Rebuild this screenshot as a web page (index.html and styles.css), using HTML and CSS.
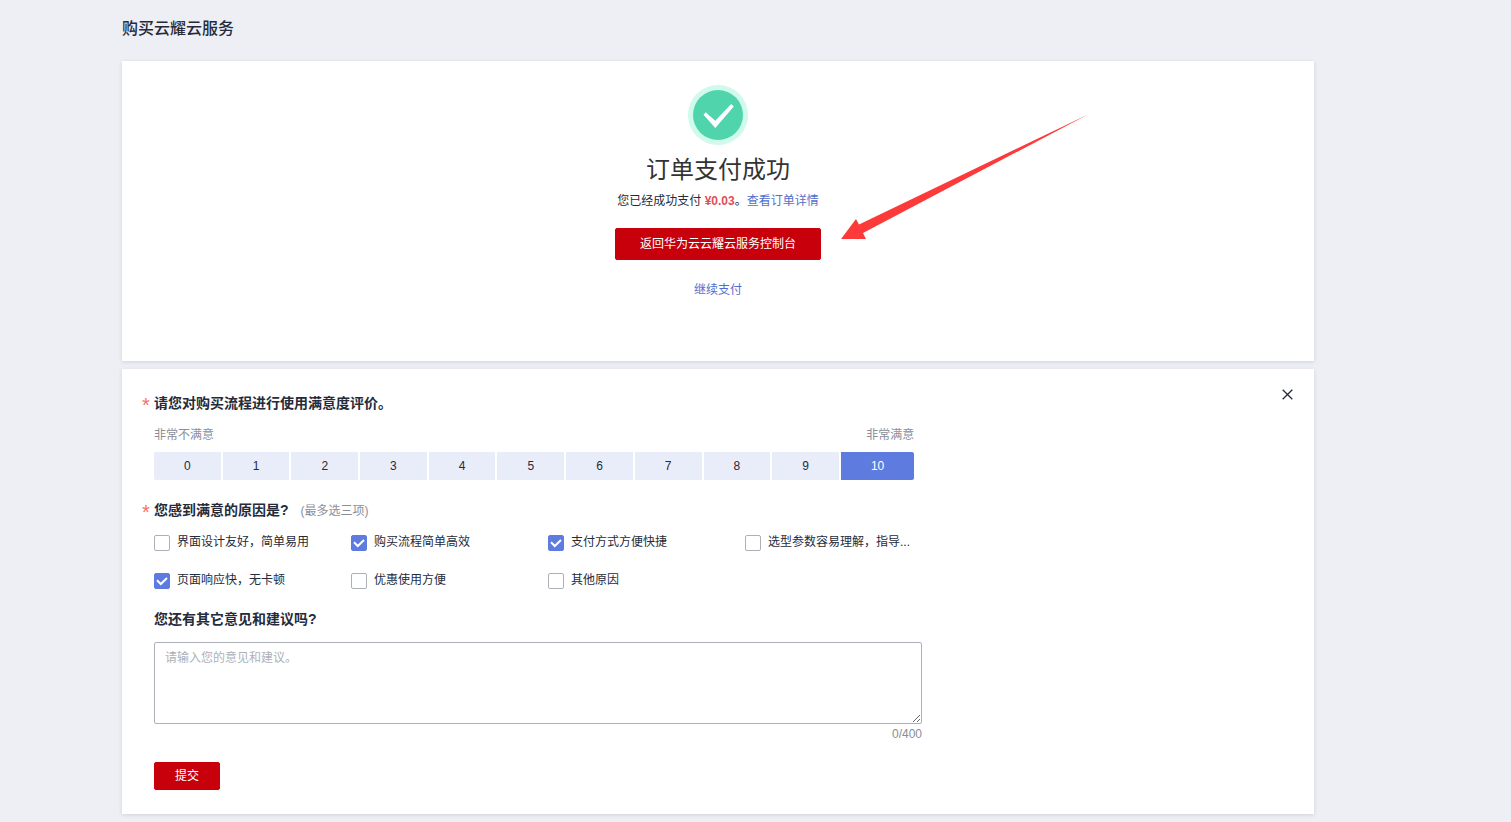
FILE: index.html
```html
<!DOCTYPE html>
<html lang="zh-CN">
<head>
<meta charset="utf-8">
<meta name="viewport" content="width=device-width, initial-scale=1">
<title>购买云耀云服务</title>
<link rel="stylesheet" href="styles.css">
</head>
<body>
<main class="page">
  <h1 class="page-title">购买云耀云服务</h1>

  <section class="card result">
    <svg class="result-icon" viewBox="0 0 60 60" aria-hidden="true">
      <circle cx="30" cy="30" r="30" fill="#cffaec"/>
      <circle cx="30" cy="30" r="25" fill="#50d4ab"/>
      <path d="M15.500 29.800 17.800 27.300 27.200 35.800 43.200 19 45.800 21.500 27.300 43Z" fill="#fff"/>
    </svg>
    <h2 class="result-title">订单支付成功</h2>
    <p class="result-text">您已经成功支付 <strong class="amount">¥0.03</strong>。<a class="link" href="#order">查看订单详情</a></p>
    <button class="btn btn-console" type="button">返回华为云云耀云服务控制台</button>
    <a class="link" href="#pay">继续支付</a>
    <svg class="arrow" viewBox="0 0 252 132" aria-hidden="true">
      <path d="M3 128 18 108 21 113.500 250 3.500 25 122 28 128Z" fill="#fc3a3a"/>
    </svg>
  </section>

  <form class="card survey">
    <div class="survey-head">
      <h3 class="question required" id="q-score"><span class="star">*</span>请您对购买流程进行使用满意度评价。</h3>
      <button class="close" type="button" aria-label="关闭">
        <svg viewBox="0 0 11 11" aria-hidden="true"><path d="M.7.7 10.300 10.300M10.300.7.7 10.300" fill="none" stroke="#252b3a" stroke-width="1.300"/></svg>
      </button>
    </div>
    <div class="scale-block">
      <div class="scale-ends"><span>非常不满意</span><span>非常满意</span></div>
      <div class="scale" role="radiogroup" aria-labelledby="q-score">
        <label class="score"><input type="radio" name="score" value="0"><span>0</span></label>
        <label class="score"><input type="radio" name="score" value="1"><span>1</span></label>
        <label class="score"><input type="radio" name="score" value="2"><span>2</span></label>
        <label class="score"><input type="radio" name="score" value="3"><span>3</span></label>
        <label class="score"><input type="radio" name="score" value="4"><span>4</span></label>
        <label class="score"><input type="radio" name="score" value="5"><span>5</span></label>
        <label class="score"><input type="radio" name="score" value="6"><span>6</span></label>
        <label class="score"><input type="radio" name="score" value="7"><span>7</span></label>
        <label class="score"><input type="radio" name="score" value="8"><span>8</span></label>
        <label class="score"><input type="radio" name="score" value="9"><span>9</span></label>
        <label class="score"><input type="radio" name="score" value="10" checked><span>10</span></label>
      </div>
    </div>

    <h3 class="question required"><span class="star">*</span>您感到满意的原因是?<small class="hint">(最多选三项)</small></h3>
    <div class="reasons">
      <label class="reason"><input class="check" type="checkbox">界面设计友好，简单易用</label>
      <label class="reason"><input class="check" type="checkbox" checked>购买流程简单高效</label>
      <label class="reason"><input class="check" type="checkbox" checked>支付方式方便快捷</label>
      <label class="reason"><input class="check" type="checkbox">选型参数容易理解，指导...</label>
      <label class="reason"><input class="check" type="checkbox" checked>页面响应快，无卡顿</label>
      <label class="reason"><input class="check" type="checkbox">优惠使用方便</label>
      <label class="reason"><input class="check" type="checkbox">其他原因</label>
    </div>

    <label class="question" for="comment">您还有其它意见和建议吗?</label>
    <div class="comment-block">
      <textarea class="comment" id="comment" maxlength="400" placeholder="请输入您的意见和建议。"></textarea>
      <span class="count">0/400</span>
    </div>
    <button class="btn btn-submit" type="submit">提交</button>
  </form>
</main>
</body>
</html>
```
FILE: styles.css
```css
* {
  box-sizing: border-box;
}

body {
  margin: 0;
  background: #eeeff5;
  color: #252b3a;
  font: 12px/18px "Liberation Sans", "Noto Sans CJK SC", sans-serif;
}

button,
textarea {
  font: inherit;
}

h1,
h2,
h3,
p {
  margin: 0;
}

.page {
  display: flex;
  flex-direction: column;
  gap: 8px;
  padding: 17px 197px 8px 122px;
}

.page-title {
  margin-bottom: 12px;
  font-size: 16px;
  line-height: 24px;
  font-weight: 500;
}

.card {
  background: #fff;
  box-shadow: 0 1px 4px rgba(37, 43, 58, 0.14);
}

.link {
  color: #526ecc;
  text-decoration: none;
}

.btn {
  border: 1px solid #c7000b;
  border-radius: 2px;
  background: #c7000b;
  color: #fff;
  cursor: pointer;
}

/* payment result */
.result {
  position: relative;
  display: flex;
  flex-direction: column;
  align-items: center;
  padding: 24px 24px 62px;
}

.result-icon {
  width: 60px;
  height: 60px;
}

.result-title {
  margin-top: 7px;
  color: #333;
  font-size: 24px;
  line-height: 36px;
  font-weight: 400;
}

.result-text {
  margin-top: 4px;
}

.amount {
  color: #e34d59;
}

.btn-console {
  height: 32px;
  margin: 18px 0 21px;
  padding: 0 24px;
}

.arrow {
  position: absolute;
  top: 50px;
  left: calc(50% + 120px);
  width: 252px;
  height: 132px;
}

/* survey */
.survey {
  display: flex;
  flex-direction: column;
  align-items: flex-start;
  padding: 20px 21px 24px 32px;
}

.survey-head {
  display: flex;
  align-self: stretch;
  justify-content: space-between;
}

.question {
  margin-top: 4px;
  font-size: 14px;
  line-height: 20px;
  font-weight: 700;
}

.required {
  margin-left: -12px;
}

.star {
  display: inline-block;
  width: 12px;
  color: #f66f6a;
  font-size: 20px;
  line-height: 0;
  vertical-align: -4px;
  font-weight: 400;
}

.hint {
  margin-left: 12px;
  color: #8a8e99;
  font-size: 12px;
  font-weight: 400;
}

.close {
  display: flex;
  width: 11px;
  height: 11px;
  padding: 0;
  border: 0;
  background: none;
  cursor: pointer;
}

.close svg {
  width: 11px;
  height: 11px;
}

.scale-block {
  margin: 13px 0 16px;
}

.scale-ends {
  display: flex;
  justify-content: space-between;
  margin-bottom: 8px;
  color: #8a8e99;
}

.scale {
  display: flex;
  gap: 2px;
  overflow: hidden;
  border-radius: 2px;
}

.score {
  position: relative;
  cursor: pointer;
}

.score input {
  position: absolute;
  inset: 0;
  margin: 0;
  opacity: 0;
}

.score span {
  display: block;
  padding: 0 30px;
  background: #e9edfa;
  line-height: 28px;
}

.score input:checked + span {
  background: #5e7ce0;
  color: #fff;
}

.reasons {
  display: grid;
  grid-template-columns: repeat(4, 197px);
  row-gap: 20px;
  margin: 12px 0 16px;
}

.reason {
  display: flex;
  align-items: flex-end;
  gap: 7px;
  white-space: nowrap;
}

.check {
  appearance: none;
  flex: none;
  width: 16px;
  height: 16px;
  margin: 0;
  border: 1px solid #adb0b8;
  border-radius: 2px;
  background: #fff;
}

.check:checked {
  border-color: #5e7ce0;
  background: #5e7ce0 url("data:image/svg+xml,%3Csvg xmlns='http://www.w3.org/2000/svg' viewBox='0 0 14 14'%3E%3Cpath d='M2 6.200 5.800 10 12 4' fill='none' stroke='white' stroke-width='2'/%3E%3C/svg%3E") center / 14px 14px no-repeat;
}

.comment-block {
  display: flex;
  flex-direction: column;
  width: 100%;
  max-width: 768px;
  margin: 13px 0 19px;
}

.comment {
  display: block;
  height: 82px;
  margin-bottom: 1px;
  padding: 6px 10px;
  border: 1px solid #adb0b8;
  border-radius: 2px;
  color: #252b3a;
  resize: vertical;
}

.comment::placeholder {
  color: #adb0b8;
}

.count {
  align-self: flex-end;
  color: #8a8e99;
}

.btn-submit {
  height: 28px;
  padding: 0 20px;
}
```
